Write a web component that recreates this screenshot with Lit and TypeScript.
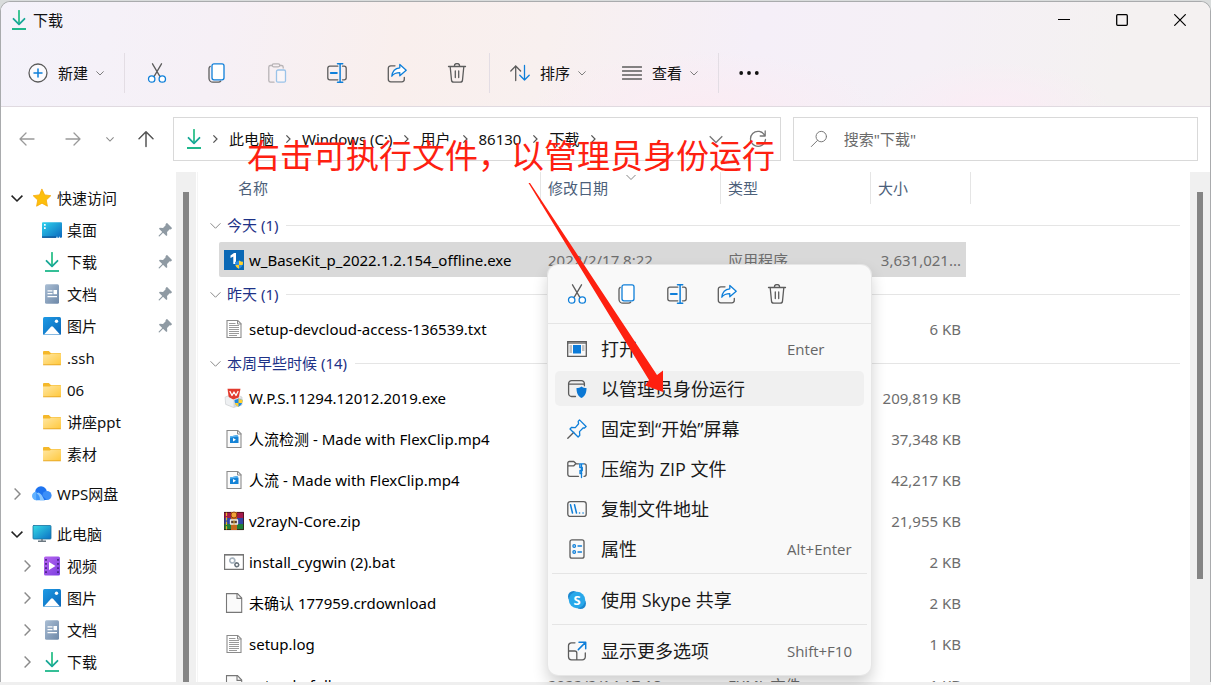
import { LitElement, html, svg, css, nothing, type TemplateResult } from "lit";
import { customElement } from "lit/decorators.js";
import { classMap } from "lit/directives/class-map.js";

const icon = (size: number, body: unknown, cls = "") =>
  html`<svg class=${cls} width=${size} height=${size} viewBox="0 0 20 20" fill="none" stroke="#5c5c5c" stroke-width="1.3" stroke-linecap="round" stroke-linejoin="round" aria-hidden="true">${body}</svg>`;

const BLUE = "#0f7fd9";

const glyphs: Record<string, TemplateResult> = {
  cut: svg`<path d="M5.5 0.8 13 13.6M14.5 .8 7 13.6"/><g stroke=${BLUE} fill="#fff"><circle cx="4.7" cy="16" r="3.2"/><circle cx="15.3" cy="16" r="3.2"/></g>`,
  copy: svg`<path d="M3.2 3.4C2.2 4 2 4.6 2 5.6v9.6a4 4 0 0 0 4 4h5.4c1 0 1.8-.3 2.3-1"/><rect x="5" y=".8" width="12" height="16" rx="2" stroke=${BLUE} fill="#fff"/>`,
  paste: svg`<g opacity=".4"><path d="M5 2.5H3.4A1.6 1.6 0 0 0 1.8 4v13.6a1.6 1.6 0 0 0 1.6 1.6H7M13 2.5h1.6A1.6 1.6 0 0 1 16.200 4v1"/><rect x="5.200" y=".8" width="7.600" height="3" rx="1.500"/><rect x="9.500" y="7" width="9" height="12.200" rx="1.500" stroke=${BLUE} fill="#fff"/></g>`,
  rename: svg`<path d="M10.800 3.200H2.800a2 2 0 0 0-2 2v9.600a2 2 0 0 0 2 2h8M15.500 3.200h1.700a2 2 0 0 1 2 2v9.600a2 2 0 0 1-2 2h-1.700"/><path stroke=${BLUE} stroke-width="1.500" d="M10.500.8h5.200M10.500 19.200h5.200M13.100.8v18.400"/><path stroke=${BLUE} stroke-width="2" d="M3.800 10h6"/>`,
  share: svg`<path d="M8 2.800H3.800a2.500 2.500 0 0 0-2.500 2.500v11a2.500 2.500 0 0 0 2.500 2.500h11a2.500 2.500 0 0 0 2.500-2.500v-2"/><path stroke=${BLUE} fill="#fff" d="M12.800 1.500 19.200 7.200 12.800 12.800V9.600c-3.800 0-6.300 1.200-8 3.600.5-4.600 3.500-8 8-8.400z"/>`,
  trash: svg`<path d="M1.500 3.500h17M7.300 3.200a2.700 2.700 0 0 1 5.400 0M3.200 3.800l1.300 13.300a2.200 2.200 0 0 0 2.200 2h6.600a2.200 2.200 0 0 0 2.200-2l1.300-13.300M8.300 8v6.500M11.700 8v6.500"/>`,
  plus: svg`<circle cx="10" cy="10" r="9" fill="#fbfafd"/><path stroke=${BLUE} stroke-width="1.500" d="M10 6v8M6 10h8"/>`,
  sort: svg`<path d="M5.700 17.500V3M.8 8 5.700 3l4.900 5"/><path stroke=${BLUE} d="M14.500 2.500V17M9.800 12.200l4.700 4.800 4.700-4.800"/>`,
  view: svg`<path d="M.5 4h19M.5 8h19M.5 12h19M.5 16h19"/>`,
  more: svg`<g fill="#111" stroke="none"><circle cx="2.200" cy="10" r="1.900"/><circle cx="10" cy="10" r="1.900"/><circle cx="17.800" cy="10" r="1.900"/></g>`,
  download: svg`<g stroke="#1fb28a" stroke-width="1.800"><path stroke="#2cc08a" d="M10 .8v12.500"/><path stroke="#18a897" d="M4.500 8.800l5.500 5.500 5.500-5.500"/><path stroke="#1fb88c" stroke-linecap="butt" d="M3 19h14"/></g>`,
  back: svg`<path stroke="#999" d="M17 10H3M9 4l-6 6 6 6"/>`,
  forward: svg`<path stroke="#999" d="M3 10h14M11 4l6 6-6 6"/>`,
  up: svg`<path stroke="#555" stroke-width="1.500" d="M10 17.500V3M3 9.800 10 2.800l7 7"/>`,
  refresh: svg`<path stroke="#777" d="M16.800 6.600A7.500 7.500 0 1 0 17.500 10.500M17.200 2v5h-5"/>`,
  search: svg`<g stroke="#777" stroke-width="1.100"><circle cx="12.500" cy="7.300" r="5.800"/><path d="M8.300 11.600 1.500 18.400"/></g>`,
  star: svg`<path fill="#fdbf0c" stroke="#f6a90a" stroke-width=".8" d="m10 1.300 2.700 5.600 6.100.8-4.500 4.300 1.100 6.200-5.400-3-5.400 3L5.700 12 1.200 7.700l6.100-.8z"/>`,
  desktop: svg`<rect x="0" y="2.200" width="20" height="15.600" rx="1" fill="url(#desk)" stroke="none"/><defs><linearGradient id="desk" x1="0" y1="0" x2="1" y2="1"><stop offset="0" stop-color="#2fd3ee"/><stop offset="1" stop-color="#0b66bd"/></linearGradient></defs><path stroke="none" fill="#fff" d="M2 4h1.700v1.700H2zM2 7.200h1.700v1.700H2zM14.500 16.800h1v1h-1zM17 16.800h1v1h-1z"/><path stroke="none" fill="#0a4f93" d="M0 16.600h14v1.200H0z"/>`,
  doc: svg`<rect x="3" y="0.300" width="14" height="19.400" rx="1.500" fill="url(#docg)" stroke="none"/><defs><linearGradient id="docg" x1="0" y1="0" x2="1" y2="1"><stop offset="0" stop-color="#aabed4"/><stop offset="1" stop-color="#6d88a8"/></linearGradient></defs><path stroke="#fff" stroke-linecap="butt" d="M5.500 6.800h5M5.500 9.700h5M5.500 12.600h9.500"/><path stroke="none" fill="#fff" d="M11.500 6h3.500v4.200h-3.500z"/>`,
  picture: svg`<rect x="1" y="1" width="18" height="18" rx="1.500" fill="url(#pic)" stroke="none"/><defs><linearGradient id="pic" x1="0" y1="0" x2="1" y2="1"><stop offset="0" stop-color="#1e9be6"/><stop offset="1" stop-color="#0a66b8"/></linearGradient></defs><path stroke="none" fill="#fff" d="M2 18.500 9 10.800c.7-.7 1.300-.7 2 0l7 7.700z"/><circle cx="14.500" cy="5.300" r="1.700" fill="#fff" stroke="none"/>`,
  folder: svg`<path stroke="none" fill="#f5b82a" d="M1 4.200c0-.7.400-1.200 1.200-1.200h4.600l2 2H18c.7 0 1 .4 1 1v3H1z"/><path stroke="none" fill="url(#fold)" d="M1 6.600h6.800l1.700-1.200H19v10.800c0 .5-.4.8-.9.800H1.900c-.5 0-.9-.3-.9-.8z"/><path stroke="#e2a01d" stroke-width=".8" d="M1.500 16.800h17"/><defs><linearGradient id="fold" x1="0" y1="0" x2="1" y2="1"><stop offset="0" stop-color="#ffe7a3"/><stop offset="1" stop-color="#ffc83d"/></linearGradient></defs>`,
  cloud: svg`<g stroke="none"><circle cx="9" cy="8" r="5.800" fill="#1d73f0"/><circle cx="15" cy="11.500" r="4.600" fill="#3c8ff8"/><circle cx="4.200" cy="12" r="4.200" fill="#62b2ff"/><path fill="#3e97fb" d="M4 7.800 13 16.200H4.200z"/><path fill="#1d73f0" d="M5 6.500 15 16h-4L4.500 8z"/><path fill="#8cc8ff" d="M6.200 8.500c3 .8 4 3.500 6.200 7.700H8c0-3.500-1-5.500-3.600-6.600z"/></g>`,
  monitor: svg`<rect x="1" y="1.500" width="18" height="13.500" rx=".8" fill="url(#mon)" stroke="#16719f" stroke-width=".8"/><defs><linearGradient id="mon" x1="0" y1="0" x2="1" y2="1"><stop offset="0" stop-color="#36dbe6"/><stop offset="1" stop-color="#0b6fc4"/></linearGradient></defs><path stroke="#6b7780" stroke-linecap="butt" stroke-width="1.500" d="M10 15v2M6 17.200h8"/>`,
  video: svg`<rect x="2" y=".5" width="16" height="19" rx="1.500" fill="url(#vid)" stroke="none"/><defs><linearGradient id="vid" x1="0" y1="0" x2="1" y2="1"><stop offset="0" stop-color="#b765ef"/><stop offset="1" stop-color="#7b3fe0"/></linearGradient></defs><path stroke="#43207f" stroke-width="1.700" stroke-linecap="butt" stroke-dasharray="1.700 2.400" d="M4 3v15M16 3v15"/><path stroke="none" fill="#fff" d="M7 6v8l6.500-4z"/>`,
  pin: svg`<g transform="rotate(45 10 10)"><path stroke="none" fill="#8f9aa3" d="M5 .5h10v2.600l-1.200.9v5l3.200 2.800v1.700H3v-1.700L6.200 9V4L5 3.100z"/><path stroke="#8f9aa3" stroke-width="1.600" d="M10 13v7"/></g>`,
  baseKit: svg`<rect width="20" height="20" fill="#0a68b5" stroke="none"/><path stroke="none" fill="#fff" d="M6.500 5.500 10 3h2v11H9.300V6.600L6.500 8z"/><path stroke="none" fill="#2f8fe0" d="M15 10.500c1.300 1 2.600 1.200 4 1.300 0 3.300-1 5.600-4 7-3-1.400-4-3.700-4-7 1.400-.1 2.700-.3 4-1.300z"/><path stroke="none" fill="#ffd02c" d="M15 10.500c1.300 1 2.600 1.200 4 1.300 0 1.200-.1 2.200-.4 3.200H15zM11.400 15H15v3.800c-2-.9-3.100-2.200-3.600-3.800z"/>`,
  text: svg`<path fill="#fff" stroke="#8b8b8b" stroke-width="1.100" stroke-linejoin="miter" d="M3 1.500h10.800L17 4.700v13.800H3z"/><path stroke="#8b8b8b" stroke-width="1" d="M13.500 1.800v3.200H17"/><path stroke="#9a9a9a" stroke-width="1" stroke-linecap="butt" d="M5 4.500h6.500M5 6.500h10M5 8.500h10M5 10.500h10M5 12.500h10M5 14.500h10M5 16.500h8"/>`,
  wps: svg`<path stroke="#c2c6ca" stroke-width=".6" fill="#eef0f2" d="m1.500 9 8-3.500 8.500 3.500v8L9.500 19.500 2 16.500z"/><path stroke="none" fill="#d3d7db" d="m9.500 12 8.500-3v8l-8.500 2.500z"/><path stroke="none" fill="#e23b2e" d="M3.500.8h13l-1.800 8.700-5.500 2-4.500-2.500z"/><path stroke="#fff" d="m6 3.500 2 4 2-3.500 2 3.500 2-4"/><path stroke="none" fill="#1e88e0" d="M14.500 10.500c1.300 1 2.600 1.200 4 1.300 0 3.300-1 5.600-4 7-3-1.400-4-3.700-4-7 1.400-.1 2.700-.3 4-1.300z"/><path stroke="none" fill="#ffd02c" d="M14.500 10.500c1.300 1 2.600 1.200 4 1.300 0 1.200-.1 2.200-.4 3.200h-3.600zM10.900 15h3.600v3.800c-2-.9-3.100-2.200-3.600-3.800z"/>`,
  mp4: svg`<path fill="#fbfbfb" stroke="#8b8b8b" stroke-width="1.100" stroke-linejoin="miter" d="M3 1.500h10.800L17 4.700v13.800H3z"/><path stroke="#8b8b8b" stroke-width="1" d="M13.500 1.800v3.200H17"/><path stroke="none" fill="#1583d6" d="M6 7.500 13.500 6v1.500h1V14H6z"/><path stroke="none" fill="#5db6f2" d="M6 7.500 13.500 6v1.500L6 8.800z"/><path stroke="none" fill="#fff" d="m9 9 3 1.800L9 12.600z"/>`,
  rar: svg`<path stroke="none" fill="#a3194c" d="M0 1h20v6H0z"/><path stroke="none" fill="#3146a6" d="M0 7h20v6H0z"/><path stroke="none" fill="#1f7f3a" d="M0 13h20v6H0z"/><path stroke="#3a1210" stroke-width=".8" d="M.4 1.400h19.200v17.200H.4z"/><path stroke="#e6b422" stroke-width="1.200" stroke-dasharray="2.500 2" d="M2.500 2v16"/><path stroke="none" fill="#c46a1e" d="M7 1h6v18H7z"/><circle cx="10" cy="4" r="3" fill="#f2a33a" stroke="#7e3208" stroke-width=".8"/><path stroke="#eee" stroke-width="1.300" fill="#58402c" d="M6.500 9h7v4h-7z"/><path stroke="#e0b040" stroke-width="1" d="M10 9.500v4"/>`,
  bat: svg`<path fill="#fff" stroke="#767676" stroke-width="1.200" stroke-linejoin="miter" d="M.6 2.600h18.800v14.800H.6z"/><path stroke="#767676" stroke-width="1.500" d="M.6 2.800h18.800"/><circle cx="8.300" cy="8.500" r="2.500" stroke="#a7b4bf" stroke-width="1.700" stroke-dasharray="1.300 .7"/><circle cx="12.800" cy="12.800" r="1.900" stroke="#68737c" stroke-width="1.600" stroke-dasharray="1.100 .6"/>`,
  blank: svg`<path fill="#fafafa" stroke="#777" stroke-width="1.100" stroke-linejoin="miter" d="M2.500.6h11L17.700 5v14.400H2.500z"/><path stroke="#777" stroke-width="1.100" d="M13 .9v4.500h4.500"/>`,
  open: svg`<path stroke-linejoin="miter" d="M.7 2.700h18.600v14.600H.7z"/><path stroke-linecap="butt" d="M.7 4h18.600"/><path stroke="none" fill="#0c7bd8" d="M6 6h8v8.500H6z"/><path stroke="#888" stroke-width="1" stroke-linecap="butt" d="M2.500 7H5M2.500 9H5M2.500 11H5M2.500 13H5M15 7h2.500M15 9h2.500M15 11h2.500"/>`,
  admin: svg`<path d="M8.500 17.500H4.600a3 3 0 0 1-3-3V4.600a3 3 0 0 1 3-3h9.800a3 3 0 0 1 3 3v2.200M1.600 5.200h15.800"/><path stroke="none" fill="#0b78d4" d="M14.500 7.500c1.500 1.100 3 1.500 5 1.600 0 4.800-1.200 8-5 10-3.800-2-5-5.200-5-10 2-.1 3.500-.5 5-1.600z"/>`,
  pinStart: svg`<path d="M.8 19.200 6.800 13.200"/><path stroke=${BLUE} d="M12.500.9 19.100 7.500 17.500 9l-1.200-.2-3.800 3.800.3 3.600-1.700 1.800L3 10l1.700-1.700 3.600.3 3.300-3.800-.4-2.400z"/>`,
  zip: svg`<path d="M11.500 17.300H2.800a2 2 0 0 1-2-2V4a1.500 1.500 0 0 1 1.500-1.500h4.500l2.400 2.300h2.300M17 4.800h.2a2 2 0 0 1 2 2v8.500a2 2 0 0 1-2 2H17M.8 6.800h6l2-2"/><path stroke=${BLUE} stroke-width="1.300" d="M12.500 4.800h4M12.800 5v3.500h2.500v3H13v3h1.800M14.500 5.500v13"/>`,
  path: svg`<rect x=".8" y="2.600" width="18.400" height="14.800" rx="2.500"/><path stroke=${BLUE} stroke-width="1.500" d="m3.500 5.800 2 8.200M7.500 5.800l2 8.200M12.500 14h.1M16 14h.1"/>`,
  props: svg`<rect x="3" y=".8" width="14" height="18.400" rx="2"/><g stroke=${BLUE}><circle cx="7.200" cy="7" r="1.300"/><circle cx="7.200" cy="13" r="1.300"/><path d="M11 7h3.500M11 13h3.500"/></g>`,
  expand: svg`<path d="M8 1.800H4.500a3 3 0 0 0-3 3v11a3 3 0 0 0 3 3h10.800a3 3 0 0 0 3-3V12M1.500 10h6.300a2 2 0 0 1 2 2v6.800"/><path stroke=${BLUE} stroke-width="1.500" d="M12 1.200h6.700v6.600M18.500 1.400 11.300 8.600"/>`,
};

const skype = html`<svg width="20" height="20" viewBox="0 0 20 20" aria-hidden="true">
  <circle cx="6.500" cy="6.500" r="5.500" fill="#1b87cf" /><circle cx="13.500" cy="13.500" r="5.500" fill="#1b87cf" />
  <circle cx="10" cy="10" r="8.200" fill="#28a8ea" />
  <text x="10" y="14.500" text-anchor="middle" font-family="Open Sans, sans-serif" font-weight="700" font-size="13" fill="#fff">S</text>
</svg>`;

interface TreeNode { label: string; icon: string; open?: boolean; branch?: boolean; pinned?: boolean }
interface TreeSection { root: TreeNode; children: TreeNode[] }
interface FileRow { name: string; icon: string; size: string; date?: string; type?: string; selected?: boolean }

const tree: TreeSection[] = [
  {
    root: { label: "快速访问", icon: "star", open: true },
    children: [
      { label: "桌面", icon: "desktop", pinned: true },
      { label: "下载", icon: "download", pinned: true },
      { label: "文档", icon: "doc", pinned: true },
      { label: "图片", icon: "picture", pinned: true },
      { label: ".ssh", icon: "folder" },
      { label: "06", icon: "folder" },
      { label: "讲座ppt", icon: "folder" },
      { label: "素材", icon: "folder" },
    ],
  },
  { root: { label: "WPS网盘", icon: "cloud" }, children: [] },
  {
    root: { label: "此电脑", icon: "monitor", open: true },
    children: [
      { label: "视频", icon: "video", branch: true },
      { label: "图片", icon: "picture", branch: true },
      { label: "文档", icon: "doc", branch: true },
      { label: "下载", icon: "download", branch: true },
    ],
  },
];

const groups: { title: string; files: FileRow[] }[] = [
  {
    title: "今天 (1)",
    files: [{ name: "w_BaseKit_p_2022.1.2.154_offline.exe", icon: "baseKit", date: "2022/2/17 8:22", type: "应用程序", size: "3,631,021...", selected: true }],
  },
  { title: "昨天 (1)", files: [{ name: "setup-devcloud-access-136539.txt", icon: "text", size: "6 KB" }] },
  {
    title: "本周早些时候 (14)",
    files: [
      { name: "W.P.S.11294.12012.2019.exe", icon: "wps", size: "209,819 KB" },
      { name: "人流检测 - Made with FlexClip.mp4", icon: "mp4", size: "37,348 KB" },
      { name: "人流 - Made with FlexClip.mp4", icon: "mp4", size: "42,217 KB" },
      { name: "v2rayN-Core.zip", icon: "rar", size: "21,955 KB" },
      { name: "install_cygwin (2).bat", icon: "bat", size: "2 KB" },
      { name: "未确认 177959.crdownload", icon: "blank", size: "2 KB" },
      { name: "setup.log", icon: "text", size: "1 KB" },
      { name: "setup.lo.full", icon: "blank", date: "2022/2/14 17:18", type: "EXML 文件", size: "1 KB" },
    ],
  },
];

const menu: { label: string; icon: string; key?: string; active?: boolean }[][] = [
  [
    { label: "打开", icon: "open", key: "Enter" },
    { label: "以管理员身份运行", icon: "admin", active: true },
    { label: "固定到“开始”屏幕", icon: "pinStart" },
    { label: "压缩为 ZIP 文件", icon: "zip" },
    { label: "复制文件地址", icon: "path" },
    { label: "属性", icon: "props", key: "Alt+Enter" },
  ],
  [{ label: "使用 Skype 共享", icon: "skype" }],
  [{ label: "显示更多选项", icon: "expand", key: "Shift+F10" }],
];

@customElement("app-root")
export class AppRoot extends LitElement {
  static styles = css`
    :host {
      display: block;
      height: 100vh;
      min-height: 400px;
      overflow: hidden;
      position: relative;
      background: #efefef;
      color: #111;
      font: 15px/20px "Noto Sans", "Noto Sans CJK SC", sans-serif;
    }
    * { box-sizing: border-box; }
    svg { display: block; flex: none; }
    button {
      font: inherit;
      color: inherit;
      background: none;
      border: 0;
      padding: 0;
      display: flex;
      align-items: center;
    }
    .frame {
      height: 100%;
      padding: 1px 0 3px;
      background: linear-gradient(#d9dcdc 12px, #efefef 12px);
    }
    .window {
      height: 100%;
      display: flex;
      flex-direction: column;
      background: #fff;
      border: 1px solid #a9abad;
      border-bottom: 0;
      border-radius: 10px 10px 0 0;
      overflow: hidden;
    }
    .chrome {
      background:
        radial-gradient(ellipse 120px 50px at 82% 105%, #fbecf5, transparent),
        radial-gradient(ellipse 180px 60px at 58% 105%, #fbecf3, transparent),
        linear-gradient(100deg, #f4f2fa 0%, #f6f0f6 18%, #f9efed 33%, #f8f0ef 45%, #f5eff8 62%, #f5f0f6 76%, #f4f1f1 92%);
      border-bottom: 1px solid #e0dae0;
    }
    .titlebar { display: flex; align-items: center; height: 36px; padding: 0 1px 0 8px; }
    .title { flex: 1; padding-left: 4px; }
    .caption { width: 58px; height: 36px; justify-content: center; }
    .toolbar { display: flex; align-items: center; height: 68px; padding-top: 2px; }
    .tool { height: 40px; gap: 10px; }
    .tool-new { padding: 0 18px 0 27px; }
    .tool-icon { width: 60px; justify-content: center; }
    .tool-menu { padding: 0 18px; }
    .tool-more { padding: 0 18px; }
    .tool .chev { margin-left: -2px; }
    .rule { width: 1px; height: 40px; margin: 0 2px; background: #e3dde4; }
    .navbar {
      display: grid;
      grid-template-columns: 144px minmax(0, 3fr) minmax(0, 2fr);
      column-gap: 12px;
      height: 65px;
      padding: 10px 12px 0 16px;
    }
    .arrows { display: flex; align-items: center; gap: 26px; height: 44px; }
    .arrows .history { margin: 0 -4px 0 -3px; }
    .address {
      height: 44px;
      display: flex;
      align-items: center;
      gap: 10px;
      border: 1px solid #d9d9d9;
      padding: 0 12px 0 10px;
      white-space: nowrap;
    }
    .place { margin-right: -3px; }
    .crumb { color: #111; text-decoration: none; }
    .spacer { flex: 1; }
    .address .refresh { margin-left: 15px; }
    .search {
      height: 44px;
      display: flex;
      align-items: center;
      gap: 16px;
      border: 1px solid #d9d9d9;
      padding: 0 16px;
    }
    .search-input { flex: 1; min-width: 0; border: 0; outline: 0; padding: 0; font: inherit; background: none; }
    .search-input::placeholder { color: #6a6a6a; opacity: 1; }
    .body { flex: 1; min-height: 0; display: flex; }
    .sidebar { width: 175px; overflow: hidden; padding-top: 10px; display: flex; flex-direction: column; gap: 8px; }
    .node { display: flex; align-items: center; height: 32px; padding: 0 4px 0 10px; gap: 5px; }
    .node.child { padding-left: 20px; }
    .node .twist { width: 12px; margin-right: 4px; }
    .node .label { flex: 1; }
    .bar { width: 20px; background: #f0f0f0; padding: 20px 7px 0; }
    .thumb { height: 100%; background: #858585; }
    .thumb.short { height: 79%; }
    .main { flex: 1; min-width: 0; overflow: hidden; margin-left: 1px; border-left: 1px solid #f5f5f5; }
    .files { width: 100%; border-collapse: separate; border-spacing: 0; table-layout: fixed; }
    .c-name { width: 343px; }
    .c-date { width: 180px; }
    .c-type { width: 150px; }
    .c-size { width: 100px; }
    th { height: 32px; padding: 0 0 0 7px; font-weight: 400; text-align: left; color: #4c607a; border-right: 1px solid #e5e5e5; }
    th:first-child { padding-left: 40px; }
    th:last-child { border: 0; }
    .sorted { position: relative; }
    .sorted svg { position: absolute; top: 0; left: 50%; margin-left: -5px; }
    td { padding: 0; white-space: nowrap; }
    .group { display: flex; align-items: center; height: 28px; gap: 6px; padding: 0 10px 0 12px; color: #1e3287; }
    .first .group { margin-top: 7px; }
    .group-line { flex: 1; height: 1px; background: #e5e5e5; margin-left: 2px; }
    .cell { height: 35px; margin: 3px 0; display: flex; align-items: center; color: #6d6d6d; padding-left: 7px; overflow: hidden; }
    .cell.name { margin-left: 21px; padding-left: 5px; gap: 5px; color: #000; border-radius: 2px 0 0 2px; }
    .cell.size { justify-content: flex-end; margin-right: 5px; padding: 0 5px 0 0; }
    .selected .cell { background: #d9d9d9; }
    .menu {
      position: absolute;
      left: 548px;
      top: 265px;
      width: 323px;
      background: #f9f9f9;
      border-radius: 10px;
      box-shadow: 0 0 0 1px #e6e6e6, 0 8px 16px rgba(0, 0, 0, 0.2);
      color: #1a1a1a;
      font-family: "Open Sans", "Noto Sans CJK SC", sans-serif;
    }
    .quick { display: flex; height: 59px; padding: 0 4px; border-bottom: 1px solid #e5e5e5; }
    .quick button { width: 50px; justify-content: center; }
    .section { padding: 2px 7px; }
    .section + .section { border-top: 1px solid #e5e5e5; margin: 0 4px; padding: 3px 3px 2px; }
    .item { width: 100%; height: 35px; margin: 5px 0; padding: 0 12px; gap: 14px; font-size: 18px; border-radius: 5px; }
    .item.active { background: #f0f0f0; }
    .item-label { width: 172px; text-align: left; white-space: nowrap; }
    .key { font-size: 15px; color: #666; white-space: nowrap; }
    .note { position: absolute; left: 247px; top: 136px; font-size: 33px; line-height: 40px; color: #fe2010; white-space: nowrap; margin: 0; }
    .pointer { position: absolute; left: 520px; top: 176px; }
  `;

  private chev(dir: string, size: number, color: string, width = 2) {
    return html`<svg width=${size} height=${size} viewBox="0 0 20 20" fill="none" stroke=${color} stroke-width=${width} class="chev" aria-hidden="true">
      ${dir === "down" ? svg`<path d="m1 6 9 9 9-9"/>` : svg`<path d="m6 1 9 9-9 9"/>`}
    </svg>`;
  }

  private tool(name: string, label: string) {
    return html`<button class="tool tool-icon" aria-label=${label}>${icon(20, glyphs[name])}</button>`;
  }

  private node(n: TreeNode, child: boolean) {
    const twist = child
      ? n.branch ? this.chev("right", 12, "#8a8a8a", 2.4) : nothing
      : n.open ? this.chev("down", 12, "#222", 2.6) : this.chev("right", 12, "#8a8a8a", 2.4);
    return html`<div class=${classMap({ node: true, child })} role="treeitem">
      <span class="twist">${twist}</span>${icon(20, glyphs[n.icon])}
      <span class="label">${n.label}</span>${n.pinned ? icon(15, glyphs.pin) : nothing}
    </div>`;
  }

  private file(f: FileRow) {
    return html`<tr class=${classMap({ selected: !!f.selected })}>
      <td><div class="cell name">${icon(20, glyphs[f.icon])}<span>${f.name}</span></div></td>
      <td><div class="cell">${f.date ?? ""}</div></td>
      <td><div class="cell">${f.type ?? ""}</div></td>
      <td><div class="cell size">${f.size}</div></td>
      <td></td>
    </tr>`;
  }

  render() {
    const crumbs = ["此电脑", "Windows (C:)", "用户", "86130", "下载"];
    return html`
      <div class="frame"><div class="window">
        <header class="chrome">
          <div class="titlebar">
            ${icon(20, glyphs.download)}<span class="title">下载</span>
            <button class="caption" aria-label="最小化"><svg width="12" height="12" stroke="#000"><path d="M0 5.500h12" /></svg></button>
            <button class="caption" aria-label="最大化"><svg width="12" height="12" fill="none" stroke="#000" stroke-width="1.300"><rect x=".7" y=".7" width="10.600" height="10.600" rx="1" /></svg></button>
            <button class="caption" aria-label="关闭"><svg width="12" height="12" stroke="#000" stroke-width="1.200"><path d="m.3.3 11.400 11.400M11.700.3.3 11.700" /></svg></button>
          </div>
          <div class="toolbar">
            <button class="tool tool-new">${icon(20, glyphs.plus)}<span>新建</span>${this.chev("down", 8, "#777", 2.4)}</button>
            <span class="rule"></span>
            ${this.tool("cut", "剪切")}${this.tool("copy", "复制")}${this.tool("paste", "粘贴")}
            ${this.tool("rename", "重命名")}${this.tool("share", "共享")}${this.tool("trash", "删除")}
            <span class="rule"></span>
            <button class="tool tool-menu">${icon(20, glyphs.sort)}<span>排序</span>${this.chev("down", 8, "#777", 2.4)}</button>
            <button class="tool tool-menu">${icon(20, glyphs.view)}<span>查看</span>${this.chev("down", 8, "#777", 2.4)}</button>
            <span class="rule"></span>
            <button class="tool tool-more" aria-label="更多">${icon(20, glyphs.more)}</button>
          </div>
        </header>

        <nav class="navbar">
          <div class="arrows">
            <button aria-label="后退">${icon(20, glyphs.back)}</button>
            <button aria-label="前进">${icon(20, glyphs.forward)}</button>
            <button class="history" aria-label="最近位置">${this.chev("down", 8, "#888", 2.6)}</button>
            <button aria-label="向上">${icon(20, glyphs.up)}</button>
          </div>
          <div class="address">
            ${icon(20, glyphs.download, "place")}${this.chev("right", 8, "#555", 3)}
            ${crumbs.map((c) => html`<a class="crumb" href="#">${c}</a>${this.chev("right", 8, "#555", 3)}`)}
            <span class="spacer"></span>
            <button aria-label="展开">${this.chev("down", 14, "#777", 1.8)}</button>
            <button class="refresh" aria-label="刷新">${icon(20, glyphs.refresh)}</button>
          </div>
          <label class="search">${icon(18, glyphs.search)}<input class="search-input" type="text" aria-label="搜索" placeholder='搜索"下载"' /></label>
        </nav>

        <div class="body">
          <aside class="sidebar" role="tree">
            ${tree.map((s) => html`<div>${this.node(s.root, false)}${s.children.map((c) => this.node(c, true))}</div>`)}
          </aside>
          <div class="bar"><div class="thumb"></div></div>
          <main class="main">
            <table class="files">
              <colgroup><col class="c-name" /><col class="c-date" /><col class="c-type" /><col class="c-size" /><col /></colgroup>
              <thead><tr><th>名称</th><th class="sorted">修改日期${this.chev("down", 10, "#777", 1.8)}</th><th>类型</th><th>大小</th><th></th></tr></thead>
              ${groups.map((g, i) => html`<tbody>
                <tr class=${classMap({ first: i === 0 })}><td colspan="5"><div class="group">${this.chev("down", 11, "#888", 1.8)}<span>${g.title}</span><span class="group-line"></span></div></td></tr>
                ${g.files.map((f) => this.file(f))}
              </tbody>`)}
            </table>
          </main>
          <div class="bar"><div class="thumb short"></div></div>
        </div>
      </div></div>

      <div class="menu" role="menu">
        <div class="quick">
          <button aria-label="剪切">${icon(20, glyphs.cut)}</button>
          <button aria-label="复制">${icon(20, glyphs.copy)}</button>
          <button aria-label="重命名">${icon(20, glyphs.rename)}</button>
          <button aria-label="共享">${icon(20, glyphs.share)}</button>
          <button aria-label="删除">${icon(20, glyphs.trash)}</button>
        </div>
        ${menu.map((section) => html`<div class="section">
          ${section.map((m) => html`<button role="menuitem" class=${classMap({ item: true, active: !!m.active })}>
            ${m.icon === "skype" ? skype : icon(20, glyphs[m.icon])}
            <span class="item-label">${m.label}</span>${m.key ? html`<span class="key">${m.key}</span>` : nothing}
          </button>`)}
        </div>`)}
      </div>

      <p class="note">右击可执行文件，以管理员身份运行</p>
      <svg class="pointer" width="160" height="224" aria-hidden="true">
        <path fill="#fe2010" d="M8.500 7 10 7 137 199 143 194.500V216L125 209.500 129 204z" />
      </svg>
    `;
  }
}
